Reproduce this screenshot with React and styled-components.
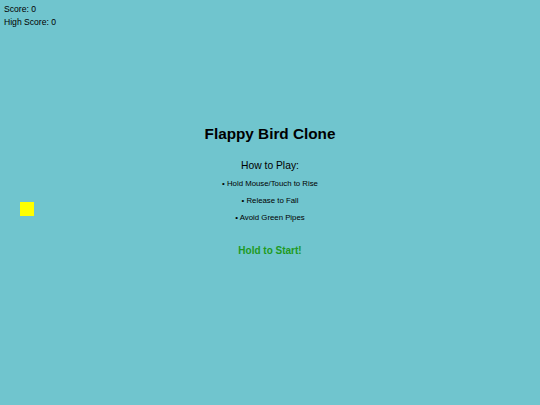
import React from 'react'
import styled, {createGlobalStyle} from 'styled-components'

const GlobalStyle = createGlobalStyle`
	html, body {
		margin: 0;
		padding: 0;
		background: #70c5ce;
	}
	body {
		font-family: "Liberation Sans", Arial, sans-serif;
	}
`

const Stage = styled.div`
	position: relative;
	width: 540px;
	height: 405px;
	overflow: hidden;
	background: #70c5ce;
	color: #000;
`

const Hud = styled.div`
	padding: 3px 0 0 4px;
	font-size: 8.6px;
	line-height: 13px;
`

const Menu = styled.div`
	display: flex;
	flex-direction: column;
	align-items: center;
	margin-top: 95px;
`

const Title = styled.h1`
	margin: 0;
	font-size: 15.3px;
	line-height: 20px;
	font-weight: bold;
`

const Subtitle = styled.div`
	margin-top: 15px;
	font-size: 10.3px;
	line-height: 14px;
`

const Rule = styled.div`
	margin-top: ${p => p.$gap}px;
	font-size: 7.8px;
	line-height: 10px;
`

const Start = styled.div`
	margin-top: 21px;
	font-size: 10px;
	line-height: 14px;
	font-weight: bold;
	color: #1e9a22;
`

const Bird = styled.div`
	position: absolute;
	left: 20px;
	top: 202px;
	width: 14px;
	height: 14px;
	background: #ffff00;
`

export default function App() {
	return (
		<>
			<GlobalStyle />
			<Stage>
				<Hud>
					<div>Score: 0</div>
					<div>High Score: 0</div>
				</Hud>
				<Menu>
					<Title>Flappy Bird Clone</Title>
					<Subtitle>How to Play:</Subtitle>
					<Rule $gap={6}>• Hold Mouse/Touch to Rise</Rule>
					<Rule $gap={7}>• Release to Fall</Rule>
					<Rule $gap={7}>• Avoid Green Pipes</Rule>
					<Start>Hold to Start!</Start>
				</Menu>
				<Bird />
			</Stage>
		</>
	)
}
